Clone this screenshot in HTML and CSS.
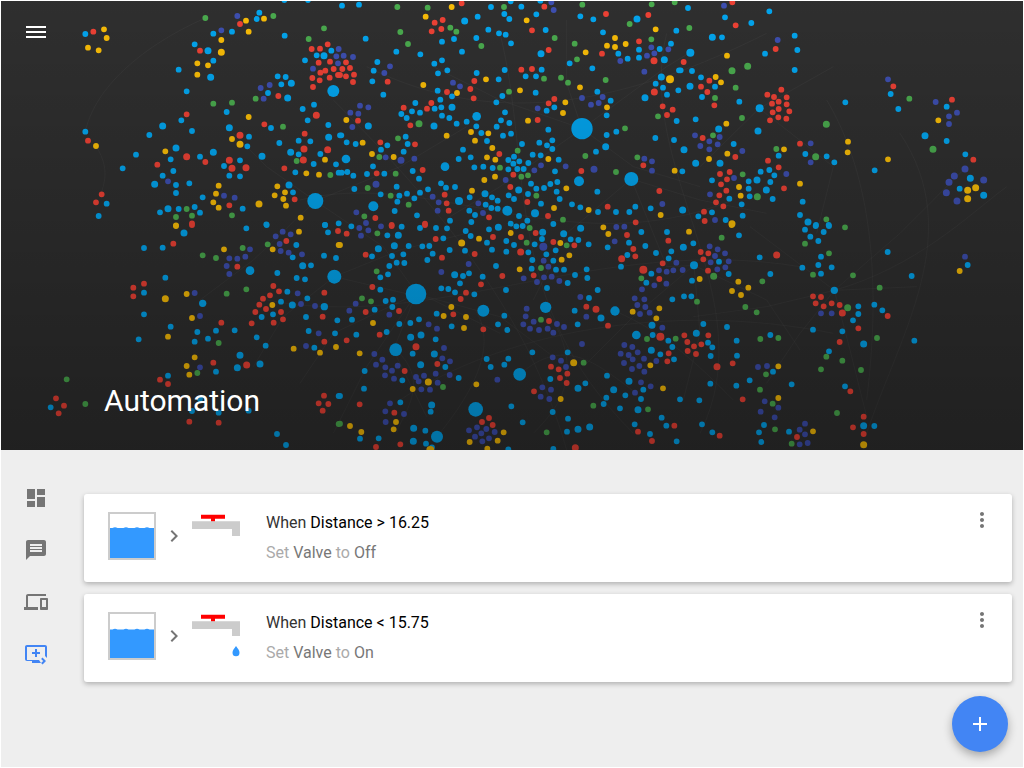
FILE: index.html
```html
<!DOCTYPE html>
<html lang="en">
<head>
<meta charset="utf-8">
<title>Automation</title>
<link rel="stylesheet" href="styles.css">
</head>
<body>
<div class="app">
<header class="hero">
<svg class="graph" viewBox="3 3 3066 1347" aria-hidden="true">
<path class="edges" d="M946 603L1200 500L1400 380M946 603L1150 740L1250 880M946 603L800 500L700 400M946 603L760 780L600 900M1003 830L1300 900L1500 1000M1003 830L850 950L760 1100M1003 830L1200 750L1400 700M1248 882L1000 1000L900 1150M1248 882L1500 950L1700 1100M1248 882L1100 1100L1000 1300M1248 882L1180 1050L1280 1250M1746 386L1500 300L1300 200M1746 386L1900 500L2100 560M1746 386L1700 250L1700 60M1746 386L2000 200L2070 158M1746 386L1500 560L1350 650M1894 537L2100 600L2300 640M1894 537L1700 700L1600 900M1894 537L2000 800L2090 796M2503 871L2300 920L2080 950M2503 871L2700 700L2900 500M2503 871L2400 1000L2300 1150M2503 871L2550 1050L2600 1250M2503 871L2750 860M2503 871L2250 680M2082 796L2300 900L2400 1050M2082 796L1900 950L1750 1100M2082 796L2100 1000L2050 1200M2278 325L2500 500L2450 700M2278 325L2500 200M2278 325L2100 500M616 54C400 150 280 280 256 395M288 438C340 520 300 570 305 583M2503 871C2750 800 2900 650 3020 560M1427 932C1500 1050 1400 1200 1311 1310M1637 922C1750 1100 1700 1200 1600 1300M1845 933C2000 1000 2100 1100 2200 1200M1559 1123C1700 1000 1800 1100 1910 1180M1187 1049C1300 1150 1200 1250 1190 1300M2480 300C2600 500 2650 800 2600 1200M2700 400C2900 700 2700 1000 2600 1300M900 600C1300 500 1700 800 2200 600M800 900C1300 1000 1800 700 2400 800M1000 300C1400 700 1600 1000 1700 1350M1500 100C1600 500 1500 900 1900 1300M2000 100C1900 500 2300 900 2100 1300M1200 1200C1500 1000 2000 900 2500 1000M1100 200C1500 400 1900 300 2300 100"/>
<g class="nodes">
<path class="b s" d="M256 102h0M640 101h0M696 95h0M770 57h0M778 38h0M584 133h0M640 182h0M536 209h0M560 274h0M854 107h0M853 0h0M924 0h0M915 181h0M950 166h0M994 152h0M833 229h0M857 231h0M844 253h0M804 279h0M908 327h0M942 314h0M923 361h0M985 375h0M680 336h0M544 361h0M576 393h0M448 405h0M256 395h0M813 384h0M747 410h0M742 439h0M838 429h0M896 422h0M931 424h0M1020 406h0M408 464h0M512 478h0M600 470h0M720 481h0M672 498h0M896 463h0M961 462h0M941 492h0M1008 493h0M886 517h0M368 505h0M520 513h0M488 527h0M528 555h0M568 550h0M688 527h0M720 529h0M528 579h0M608 592h0M879 577h0M1016 518h0M320 611h0M296 648h0M536 627h0M584 621h0M480 637h0M600 638h0M728 626h0M799 673h0M975 675h0M1016 670h0"/>
<path class="b m" d="M624 152h0M632 232h0M972 167h0M874 250h0M863 294h0M488 378h0M688 383h0M986 412h0M528 444h0M786 469h0M872 457h0M464 553h0M867 555h0M504 626h0M640 457h0"/>
<path class="r s" d="M280 95h0M720 72h0M600 152h0M935 147h0M960 146h0M983 133h0M956 188h0M990 185h0M1001 207h0M976 212h0M961 218h0M1014 225h0M937 234h0M959 241h0M989 233h0M939 261h0M835 288h0M560 343h0M793 373h0M264 422h0M914 401h0M616 486h0M472 494h0M853 505h0M305 583h0M288 607h0M884 598h0M688 616h0M576 670h0"/>
<path class="r m" d="M949 346h0M720 406h0M912 447h0M983 449h0M688 481h0M560 470h0M696 505h0M738 503h0M910 480h0"/>
<path class="y s" d="M312 88h0M320 114h0M264 143h0M296 151h0M738 62h0M792 56h0M746 95h0M664 120h0M592 190h0M624 196h0M592 224h0M746 351h0M696 417h0M288 438h0M496 454h0M975 479h0M919 520h0M957 524h0M656 557h0M832 559h0M855 577h0M648 581h0M824 586h0M850 597h0M640 607h0M656 623h0M858 617h0M902 653h0M528 676h0"/>
<path class="y m" d="M664 157h0M720 433h0M777 612h0"/>
<path class="g s" d="M616 54h0M820 48h0M972 85h0M926 117h0M767 296h0M640 311h0M696 308h0M849 380h0M890 483h0M991 525h0M560 627h0M576 647h0M528 651h0M696 646h0"/>
<path class="i s" d="M712 48h0M664 91h0M1016 147h0M1009 169h0M1014 190h0M939 206h0M809 255h0M782 264h0M791 296h0M504 544h0M672 587h0M704 593h0"/>
<circle class="bf" cx="1000" cy="273" r="18"/><circle class="bf" cx="946" cy="603" r="24"/>
<g transform="translate(1020)">
<path class="b s" d="M6 17h0M57 14h0M453 21h0M512 4h0M601 2h0M493 42h0M544 20h0M413 50h0M508 57h0M589 43h0M721 49h0M760 58h0M445 89h0M477 100h0M497 104h0M617 90h0M789 97h0M1009 92h0M77 116h0M409 114h0M306 125h0M342 117h0M513 130h0M169 155h0M241 163h0M366 155h0M689 190h0M757 205h0M835 161h0M863 176h0M897 149h0M897 173h0M959 147h0M993 131h0M283 191h0M306 181h0M112 186h0M101 212h0M294 220h0M322 211h0M97 244h0M410 219h0M494 210h0M476 238h0M557 229h0M588 229h0M605 209h0M947 251h0M969 263h0M130 284h0M293 272h0M336 289h0M301 299h0M487 288h0M469 307h0M587 278h0M772 275h0M981 284h0M1015 271h0M1017 211h0M226 309h0M184 342h0M216 334h0M240 338h0M200 354h0M284 326h0M304 322h0M306 347h0M328 354h0M495 337h0M643 322h0M620 332h0M812 302h0M800 346h0M350 371h0M380 365h0M483 361h0M508 369h0M470 380h0M409 379h0M1010 363h0M424 399h0M489 407h0M513 401h0M625 389h0M800 405h0M829 395h0M946 414h0M1002 420h0M4 406h0M20 427h0M47 432h0M142 436h0M197 410h0M203 432h0M441 423h0M598 428h0M621 436h0M637 421h0M637 447h0M546 432h0M768 455h0M123 449h0M191 455h0M369 449h0M356 477h0M392 472h0M522 470h0M578 464h0M602 466h0M656 479h0M99 499h0M403 502h0M430 500h0M458 504h0M505 480h0M538 484h0M520 491h0M565 489h0M532 507h0M505 508h0M551 507h0M22 516h0M5 518h0M40 527h0M81 522h0M133 521h0M218 513h0M237 536h0M645 514h0M303 550h0M318 563h0M345 561h0M573 551h0M631 552h0M652 546h0M43 567h0M170 560h0M122 583h0M201 581h0M178 587h0M172 605h0M223 595h0M240 578h0M264 568h0M564 582h0M589 566h0M612 564h0M650 575h0M389 592h0M456 592h0M506 586h0M522 597h0M659 597h0M772 575h0M473 602h0M603 611h0M437 614h0M454 624h0M473 626h0M388 632h0M405 645h0M696 613h0M721 622h0M774 636h0M828 636h0M868 636h0M886 620h0M932 625h0M164 633h0M231 646h0M537 648h0M562 662h0M394 666h0M330 662h0M512 671h0M640 672h0"/>
<path class="b m" d="M374 63h0M891 57h0M603 161h0M973 179h0M964 231h0M915 293h0M336 322h0M282 378h0M85 378h0M797 440h0M435 581h0M536 570h0"/>
<path class="r s" d="M365 10h0M613 20h0M798 42h0M925 45h0M284 68h0M308 60h0M275 94h0M304 87h0M576 91h0M897 124h0M626 150h0M786 161h0M18 187h0M7 207h0M30 204h0M0 225h0M18 229h0M42 224h0M39 246h0M143 245h0M544 209h0M576 207h0M403 243h0M391 267h0M321 276h0M401 295h0M626 310h0M643 297h0M274 309h0M261 326h0M191 323h0M968 319h0M998 329h0M981 345h0M54 362h0M211 376h0M593 360h0M121 427h0M225 433h0M478 462h0M910 496h0M248 510h0M110 520h0M724 513h0M520 524h0M511 561h0M958 573h0M314 584h0M320 610h0M562 606h0M803 620h0M326 632h0M106 654h0M447 652h0M624 648h0M887 667h0M255 671h0M155 675h0"/>
<path class="r m" d="M942 182h0M943 276h0"/>
<path class="y s" d="M335 21h0M257 50h0M560 61h0M947 88h0M825 114h0M801 137h0M825 141h0M857 132h0M737 157h0M438 238h0M250 255h0M540 271h0M351 279h0M720 262h0M676 307h0M801 322h0M669 339h0M19 360h0M564 362h0M393 396h0M445 400h0M405 422h0M320 407h0M68 428h0M457 444h0M96 462h0M161 471h0M441 472h0M466 479h0M625 477h0M1004 512h0M433 540h0M465 530h0M679 565h0M396 572h0M642 624h0M746 630h0M962 645h0"/>
<path class="g s" d="M172 21h0M263 23h0M492 21h0M727 14h0M935 13h0M1004 7h0M869 72h0M331 83h0M349 95h0M181 96h0M204 132h0M424 138h0M644 114h0M704 131h0M934 118h0M711 178h0M612 236h0M663 233h0M684 248h0M797 240h0M507 275h0M954 349h0M174 415h0M855 385h0M118 471h0M533 452h0M736 468h0M892 472h0M480 503h0M828 516h0M167 521h0M544 530h0M564 526h0M83 564h0M152 587h0M589 587h0M206 614h0M73 649h0M669 659h0"/>
<path class="g m" d="M237 371h0"/>
<path class="i s" d="M634 7h0M641 30h0M150 199h0M133 219h0M934 142h0M985 148h0M943 160h0M921 167h0M841 183h0M913 215h0M339 248h0M360 259h0M726 294h0M788 291h0M776 309h0M753 314h0M593 325h0M60 317h0M85 322h0M31 338h0M55 341h0M37 381h0M137 472h0M223 476h0M603 496h0M677 499h0M583 511h0M913 476h0M936 484h0M936 512h0M497 540h0M278 590h0M296 607h0M293 632h0M415 610h0M429 639h0M49 637h0M967 612h0M78 669h0M11 167h0M39 171h0"/>
<path class="i m" d="M183 481h0M762 508h0M108 553h0"/>
<path class="y l" d="M990 238h0"/>
<circle class="bf" cx="410" cy="349" r="13"/><circle class="bf" cx="18" cy="477" r="13"/><circle class="bf" cx="315" cy="500" r="13"/><circle class="bf" cx="717" cy="544" r="15"/><circle class="bf" cx="874" cy="537" r="21"/><circle class="bf" cx="357" cy="603" r="12"/><circle class="bf" cx="100" cy="619" r="15"/><circle class="bf" cx="502" cy="632" r="15"/><circle class="bf" cx="585" cy="640" r="12"/><circle class="bf" cx="726" cy="386" r="32"/>
</g>
<g transform="translate(2040)">
<path class="b s" d="M24 24h0M268 34h0M135 52h0M214 69h0M126 112h0M344 107h0M352 150h0M255 161h0M344 210h0M2 211h0M36 213h0M63 232h0M105 260h0M66 291h0M178 305h0M47 358h0M496 307h0M632 282h0M655 327h0M800 320h0M800 423h0M161 432h0M296 467h0M376 462h0M440 469h0M463 487h0M856 463h0M7 514h0M242 515h0M268 510h0M283 526h0M96 541h0M206 544h0M271 546h0M584 511h0M206 566h0M148 596h0M209 589h0M278 597h0M185 613h0M368 605h0M839 566h0M96 637h0M55 649h0M137 660h0M188 647h0M360 645h0M408 675h0M446 675h0"/>
<path class="b m" d="M97 112h0M30 259h0M116 387h0M234 393h0M735 407h0M12 449h0M47 490h0M120 490h0M231 540h0M871 535h0M259 570h0M911 586h0M8 630h0M384 666h0"/>
<path class="r s" d="M157 7h0M167 76h0M287 147h0M11 186h0M88 242h0M63 260h0M82 276h0M103 316h0M304 269h0M262 284h0M282 291h0M320 292h0M296 305h0M276 311h0M320 313h0M296 327h0M328 334h0M278 337h0M295 352h0M319 356h0M270 361h0M68 414h0M360 431h0M640 259h0M816 299h0M166 471h0M264 482h0M296 502h0M880 479h0M149 516h0M120 522h0M141 538h0M123 553h0M139 572h0M118 586h0M312 565h0M108 607h0M130 619h0M72 635h0M74 663h0"/>
<path class="y s" d="M141 167h0M107 231h0M123 247h0M139 371h0M504 425h0M503 457h0M312 448h0M142 461h0M87 477h0M624 478h0M360 551h0M177 561h0M182 587h0M775 361h0"/>
<path class="y m" d="M863 571h0M887 563h0M863 596h0M156 671h0"/>
<path class="g s" d="M28 84h0M167 263h0M105 294h0M186 354h0M688 296h0M99 406h0M289 447h0M188 523h0M439 658h0"/>
<path class="g m" d="M156 212h0M203 199h0M439 373h0M759 448h0M407 470h0M232 590h0"/>
<path class="i s" d="M132 17h0M293 120h0M624 238h0M767 306h0M831 338h0M807 349h0M807 372h0M45 406h0M119 411h0M88 424h0M113 433h0M61 438h0M88 448h0M187 453h0M392 430h0M392 487h0M319 522h0M162 534h0M90 583h0M105 660h0"/>
<path class="i m" d="M855 507h0M823 528h0M807 547h0M911 540h0M799 578h0M831 603h0"/>
<circle class="bf" cx="31" cy="158" r="12"/><circle class="bf" cx="239" cy="325" r="12"/>
</g>
<g transform="translate(0 675)">
<path class="b s" d="M739 10h0M432 69h0M488 68h0M800 0h0M975 0h0M984 22h0M889 60h0M878 97h0M933 121h0M972 92h0M1008 99h0M832 144h0M496 158h0M890 159h0M915 163h0M862 200h0M432 203h0M922 220h0M843 230h0M819 268h0M785 276h0M918 276h0M432 268h0M1012 286h0M512 305h0M592 321h0M648 317h0M704 316h0M926 318h0M1005 325h0M584 350h0M624 341h0M770 337h0M416 343h0M797 362h0M943 368h0M504 452h0M648 440h0M1016 513h0M600 522h0M576 558h0M656 563h0M746 557h0M152 547h0M831 627h0M858 660h0"/>
<path class="b m" d="M552 24h0M908 122h0M877 240h0M712 428h0M720 391h0M780 417h0"/>
<path class="r s" d="M576 0h0M520 56h0M1014 18h0M859 48h0M712 125h0M820 183h0M837 199h0M810 211h0M973 203h0M789 221h0M778 239h0M798 252h0M766 261h0M843 261h0M849 283h0M821 293h0M755 295h0M968 275h0M664 293h0M400 188h0M432 176h0M400 214h0M973 350h0M640 413h0M480 464h0M504 477h0M168 520h0M192 542h0M176 565h0M972 512h0M956 535h0M985 537h0M968 557h0M568 590h0M656 593h0"/>
<path class="r m" d="M740 420h0"/>
<path class="y s" d="M528 3h0M897 20h0M1016 60h0M672 73h0M818 73h0M817 240h0M560 207h0M576 279h0M504 335h0M881 371h0M960 383h0M1008 366h0M584 397h0M560 423h0M568 449h0"/>
<path class="y m" d="M496 221h0"/>
<path class="g s" d="M608 91h0M648 99h0M728 69h0M803 58h0M680 206h0M739 193h0M656 354h0M592 444h0M200 463h0M256 537h0M1016 597h0"/>
<path class="i s" d="M848 20h0M827 34h0M872 28h0M839 57h0M750 73h0M842 78h0M866 83h0M906 88h0M688 100h0M712 101h0M736 95h0M680 123h0M688 147h0M584 204h0M600 273h0M893 205h0M903 237h0M945 243h0M956 325h0M918 363h0M600 427h0"/>
<circle class="bf" cx="750" cy="137" r="13"/><circle class="bf" cx="973" cy="245" r="11"/><circle class="bf" cx="608" cy="235" r="11"/><circle class="bf" cx="1003" cy="155" r="21"/>
</g>
<g transform="translate(1020 675)">
<path class="b s" d="M34 4h0M185 5h0M240 9h0M288 9h0M321 10h0M377 18h0M447 13h0M529 4h0M548 3h0M904 21h0M981 21h0M392 33h0M142 31h0M310 40h0M441 53h0M499 48h0M606 42h0M692 43h0M715 45h0M522 60h0M584 58h0M746 58h0M916 63h0M206 63h0M247 64h0M268 63h0M329 75h0M375 77h0M456 74h0M499 80h0M647 76h0M565 82h0M619 88h0M948 84h0M994 79h0M96 94h0M156 93h0M190 88h0M278 86h0M803 67h0M862 90h0M986 100h0M262 105h0M170 113h0M193 114h0M577 105h0M640 107h0M148 123h0M468 123h0M575 131h0M648 134h0M672 134h0M740 133h0M867 53h0M843 125h0M144 148h0M121 157h0M369 153h0M387 145h0M428 155h0M705 150h0M742 159h0M934 146h0M919 173h0M360 175h0M683 174h0M304 190h0M325 192h0M498 195h0M621 189h0M121 194h0M345 202h0M403 208h0M773 195h0M747 219h0M137 228h0M159 224h0M157 246h0M104 254h0M997 223h0M290 266h0M493 272h0M704 257h0M36 284h0M178 297h0M211 294h0M237 283h0M474 298h0M502 315h0M713 298h0M335 304h0M49 329h0M140 321h0M287 343h0M938 330h0M985 347h0M997 366h0M577 382h0M683 382h0M961 388h0M1002 403h0M218 386h0M440 402h0M505 401h0M452 426h0M493 419h0M316 426h0M74 438h0M187 466h0M356 459h0M631 462h0M736 475h0M801 452h0M910 494h0M72 491h0M856 511h0M903 522h0M0 513h0M181 532h0M272 560h0M514 544h0M638 561h0M799 518h0M791 537h0M840 550h0M965 578h0M684 581h0M548 592h0M256 617h0M884 598h0M979 602h0M681 620h0M116 640h0M60 641h0M258 656h0M276 667h0M930 627h0M1010 649h0M505 673h0M640 672h0"/>
<path class="b m" d="M475 7h0M608 22h0M671 26h0M722 10h0M175 31h0M115 71h0M163 62h0M344 149h0M783 279h0M936 301h0M212 337h0M243 330h0M934 376h0M283 387h0M242 419h0M714 490h0M867 469h0M821 494h0M275 540h0M894 554h0M221 610h0M714 613h0M749 606h0M220 649h0"/>
<path class="r s" d="M155 3h0M255 0h0M20 26h0M287 42h0M459 36h0M543 36h0M587 24h0M861 30h0M640 51h0M703 61h0M985 47h0M880 72h0M77 89h0M306 98h0M404 87h0M886 94h0M968 115h0M487 153h0M581 151h0M958 162h0M423 178h0M97 186h0M378 203h0M362 222h0M739 245h0M77 261h0M177 258h0M340 268h0M627 288h0M804 302h0M430 313h0M119 329h0M20 346h0M986 385h0M982 409h0M194 438h0M292 417h0M633 425h0M656 433h0M682 446h0M660 459h0M680 474h0M582 499h0M59 538h0M163 563h0M447 579h0M426 591h0M458 600h0M1003 602h0M894 620h0M936 648h0M108 666h0M181 658h0"/>
<path class="r m" d="M542 81h0M845 101h0M768 253h0M228 365h0M706 668h0"/>
<path class="r l" d="M910 134h0M961 335h0"/>
<path class="y s" d="M0 60h0M790 7h0M805 27h0M512 24h0M417 41h0M661 54h0M688 91h0M665 104h0M539 133h0M958 250h0M878 260h0M334 246h0M311 273h0M378 276h0M949 280h0M99 294h0M372 309h0M59 385h0M931 421h0M218 492h0M409 478h0M969 490h0M662 522h0M168 591h0M161 613h0M64 621h0M30 603h0M491 622h0M389 651h0M473 647h0M442 671h0"/>
<path class="y m" d="M365 54h0M701 413h0M265 471h0"/>
<path class="y l" d="M271 675h0"/>
<path class="g s" d="M112 25h0M569 9h0M560 53h0M680 61h0M603 129h0M110 139h0M904 160h0M66 220h0M93 229h0M603 284h0M921 342h0M1007 341h0M731 413h0M309 486h0M760 542h0M924 553h0M620 622h0M0 596h0"/>
<path class="i s" d="M58 9h0M85 16h0M123 4h0M63 32h0M829 6h0M853 5h0M824 49h0M611 107h0M625 125h0M957 136h0M980 140h0M1000 136h0M386 117h0M1009 113h0M304 141h0M551 160h0M612 157h0M635 155h0M658 168h0M591 171h0M979 176h0M943 181h0M906 193h0M721 216h0M884 220h0M913 223h0M47 236h0M892 240h0M916 246h0M28 257h0M560 251h0M148 269h0M739 275h0M900 267h0M929 263h0M557 274h0M266 298h0M291 311h0M550 298h0M581 290h0M651 297h0M570 311h0M597 315h0M623 311h0M672 306h0M640 323h0M967 308h0M726 357h0M853 360h0M877 366h0M312 369h0M103 387h0M127 404h0M108 419h0M136 427h0M173 422h0M156 437h0M135 451h0M162 461h0M842 386h0M866 390h0M893 382h0M878 403h0M912 401h0M949 408h0M852 414h0M898 423h0M876 432h0M913 440h0M307 400h0M330 409h0M287 446h0M329 450h0M638 397h0M663 407h0M678 426h0M228 456h0M252 452h0M236 469h0M293 473h0M244 493h0M270 494h0M472 464h0M607 487h0M633 494h0M602 515h0M628 522h0M903 472h0M932 484h0M885 503h0M150 535h0M136 559h0M192 567h0M137 591h0M411 607h0M387 616h0M439 612h0M424 625h0M464 621h0M405 635h0M447 640h0M427 649h0"/>
<path class="i l" d="M610 65h0"/>
<circle class="bf" cx="228" cy="207" r="31"/><circle class="bf" cx="430" cy="257" r="18"/><circle class="bf" cx="617" cy="247" r="17"/><circle class="bf" cx="825" cy="258" r="14"/><circle class="bf" cx="167" cy="374" r="19"/><circle class="bf" cx="889" cy="330" r="13"/><circle class="bf" cx="539" cy="448" r="19"/><circle class="bf" cx="407" cy="553" r="22"/><circle class="bf" cx="291" cy="635" r="18"/>
</g>
<g transform="translate(2040 675)">
<path class="b s" d="M375 14h0M407 3h0M431 21h0M447 3h0M391 35h0M415 48h0M177 31h0M40 55h0M623 81h0M423 95h0M239 97h0M415 120h0M367 128h0M455 127h0M117 110h0M695 153h0M146 147h0M271 147h0M423 146h0M36 167h0M12 214h0M34 214h0M535 244h0M583 239h0M607 256h0M535 267h0M863 120h0M70 297h0M141 306h0M519 286h0M399 314h0M487 319h0M84 353h0M97 367h0M170 347h0M271 330h0M703 347h0M92 393h0M171 392h0M447 379h0M279 440h0M91 476h0M169 482h0M209 466h0M335 478h0M495 484h0M0 523h0M58 526h0M66 598h0M252 600h0M583 603h0M97 622h0M237 622h0M327 620h0M244 651h0"/>
<path class="b m" d="M10 67h0M49 325h0M551 357h0M551 602h0"/>
<path class="r s" d="M62 81h0M85 85h0M70 103h0M84 137h0M399 214h0M423 216h0M407 235h0M431 244h0M455 235h0M479 240h0M623 273h0M535 310h0M479 351h0M85 331h0M13 331h0M22 351h0M64 358h0M42 364h0M23 378h0M48 387h0M158 415h0M188 523h0M511 499h0M551 575h0M519 607h0M551 627h0M119 632h0M351 636h0"/>
<path class="r m" d="M290 90h0M487 264h0M111 425h0"/>
<path class="y s" d="M27 20h0M155 0h0M59 162h0M175 170h0M205 188h0M156 198h0M183 210h0M839 138h0M295 424h0M295 519h0M399 619h0"/>
<path class="y m" d="M551 659h0"/>
<path class="g s" d="M495 7h0M125 38h0M375 56h0M447 85h0M247 169h0M399 149h0M519 151h0M599 188h0M51 230h0M196 246h0M230 262h0M241 342h0M295 339h0M591 339h0M439 395h0M487 407h0M423 433h0M543 435h0M258 448h0M240 494h0M278 536h0M471 564h0M285 613h0M335 656h0"/>
<path class="g m" d="M101 154h0M503 248h0"/>
<path class="i s" d="M89 64h0M113 73h0M135 85h0M105 93h0M92 112h0M146 109h0M112 133h0M136 127h0M8 135h0M855 95h0M423 265h0M455 265h0M234 426h0M261 423h0M254 529h0M295 548h0M242 560h0M284 577h0M375 596h0M359 614h0M375 628h0M359 658h0M383 654h0"/>
<circle class="bf" cx="42" cy="121" r="12"/><circle class="bf" cx="463" cy="196" r="11"/>
</g>
</g>
</svg>
<div class="shade"></div>
<button class="menu" aria-label="Menu"><span class="menu-bar"></span><span class="menu-bar"></span><span class="menu-bar"></span></button>
<h1 class="title">Automation</h1>
</header>
<div class="body">
<nav class="rail">
<svg class="icon" viewBox="0 0 24 24"><path d="M3 13h8V3H3v10zm0 8h8v-6H3v6zm10 0h8V11h-8v10zm0-18v6h8V3h-8z"/></svg>
<svg class="icon" viewBox="0 0 24 24"><path d="M20 2H4c-1.1 0-1.99.9-1.99 2L2 22l4-4h14c1.1 0 2-.9 2-2V4c0-1.1-.9-2-2-2zm-2 12H6v-2h12v2zm0-3H6V9h12v2zm0-3H6V6h12v2z"/></svg>
<svg class="icon" viewBox="0 0 24 24"><path d="M4 6h18V4H4c-1.1 0-2 .9-2 2v11H0v3h14v-3H4V6zm19 2h-6c-.55 0-1 .45-1 1v10c0 .55.45 1 1 1h6c.55 0 1-.45 1-1V9c0-.55-.45-1-1-1zm-1 9h-4v-7h4v7z"/></svg>
<svg class="icon icon-active" viewBox="0 0 24 24"><path d="M21 3H3c-1.11 0-2 .89-2 2v12c0 1.1.89 2 2 2h5v2h9l-2-3H3V5h18v9l2 2V5c0-1.11-.9-2-2-2zm-5 7v2h-3v3h-2v-3H8v-2h3V7h2v3h3z"/><path d="M18.5 15.5l3.5 3.5-3.5 3.5-1.4-1.4 2.1-2.1-2.1-2.1z"/></svg>
</nav>
<main class="list">
<article class="card">
<div class="scene">
<svg class="tank" viewBox="0 0 48 48"><rect class="tank-wall" width="48" height="48"/><rect class="tank-air" x="2" y="2" width="44" height="44"/><path class="water" d="M2 16H4.500q2.500-1.500 5 0H15.500q2.500-1.500 5 0H26.500q2.500-1.500 5 0H36.500q2.500-1.500 5 0H46V46H2z"/></svg>
<svg class="chev" viewBox="0 0 24 24"><path d="M10 6L8.590 7.410 13.170 12l-4.580 4.590L10 18l6-6z"/></svg>
<svg class="tap" viewBox="0 0 48 48"><path class="valve" d="M9 2.700h24v4H23v3h-4v-3H9z"/><path class="pipe" d="M0 9.300h48V24h-8v-7H0z"/></svg>
</div>
<div class="rule"><p class="when">When <b>Distance &gt; 16.25</b></p><p class="then">Set <b>Valve</b> to <b>Off</b></p></div>
<svg class="more" viewBox="0 0 24 24"><path d="M12 8c1.100 0 2-.9 2-2s-.9-2-2-2-2 .9-2 2 .9 2 2 2zm0 2c-1.100 0-2 .9-2 2s.9 2 2 2 2-.9 2-2-.9-2-2-2zm0 6c-1.100 0-2 .9-2 2s.9 2 2 2 2-.9 2-2-.9-2-2-2z"/></svg>
</article>
<article class="card">
<div class="scene">
<svg class="tank" viewBox="0 0 48 48"><rect class="tank-wall" width="48" height="48"/><rect class="tank-air" x="2" y="2" width="44" height="44"/><path class="water" d="M2 17.500H4.500q2.500-1.500 5 0H15.500q2.500-1.500 5 0H26.500q2.500-1.500 5 0H36.500q2.500-1.500 5 0H46V46H2z"/></svg>
<svg class="chev" viewBox="0 0 24 24"><path d="M10 6L8.590 7.410 13.170 12l-4.580 4.590L10 18l6-6z"/></svg>
<svg class="tap" viewBox="0 0 48 48"><path class="valve" d="M9 2.700h24v4H23v3h-4v-3H9z"/><path class="pipe" d="M0 9.300h48V24h-8v-7H0z"/><path class="drop" d="M44 34c2 2.800 3.500 4.500 3.500 6.700a3.500 3.500 0 0 1-7 0c0-2.200 1.500-3.900 3.500-6.700z"/></svg>
</div>
<div class="rule"><p class="when">When <b>Distance &lt; 15.75</b></p><p class="then">Set <b>Valve</b> to <b>On</b></p></div>
<svg class="more" viewBox="0 0 24 24"><path d="M12 8c1.100 0 2-.9 2-2s-.9-2-2-2-2 .9-2 2 .9 2 2 2zm0 2c-1.100 0-2 .9-2 2s.9 2 2 2 2-.9 2-2-.9-2-2-2zm0 6c-1.100 0-2 .9-2 2s.9 2 2 2 2-.9 2-2-.9-2-2-2z"/></svg>
</article>
</main>
<button class="fab" aria-label="Add"><svg class="fab-icon" viewBox="0 0 24 24"><path d="M19 13h-6v6h-2v-6H5v-2h6V5h2v6h6v2z"/></svg></button>
</div>
</div>
</body>
</html>
```
FILE: styles.css
```css
* { box-sizing: border-box; }
html, body { margin: 0; height: 100%; overflow: hidden; }
body { padding: 1px; background: #fff; font-family: Roboto, "Liberation Sans", sans-serif; }
.app { height: 766px; display: flex; flex-direction: column; background: #eee; }

.hero { position: relative; flex: 0 0 449px; background: #303030; overflow: hidden; }
.graph { position: absolute; inset: 0; width: 1022px; height: 449px; display: block; }
.edges { fill: none; stroke: rgba(255,255,255,.035); stroke-width: 3; }
.nodes path { fill: none; stroke-linecap: round; }
.s { stroke-width: 17.5; }
.m { stroke-width: 21; }
.l { stroke-width: 24; }
.b { stroke: #03a9f4; }
.r { stroke: #f44336; }
.y { stroke: #ffc107; }
.g { stroke: #4caf50; }
.i { stroke: #3f51b5; }
.bf { fill: #03a9f4; }
.shade { position: absolute; inset: 0; background: linear-gradient(rgba(0,0,0,.03), rgba(0,0,0,.33)); }
.menu { position: absolute; left: 25px; top: 25px; width: 20px; height: 12px; padding: 0; border: 0; background: none; display: flex; flex-direction: column; justify-content: space-between; }
.menu-bar { display: block; height: 2px; background: #fff; }
.title { position: absolute; left: 103px; top: 382px; margin: 0; font-size: 30px; line-height: 36px; font-weight: 400; color: #fff; }

.body { position: relative; flex: 1; display: flex; }
.rail { flex: 0 0 83px; padding: 36px 0 0 23px; display: flex; flex-direction: column; gap: 28px; }
.icon { width: 24px; height: 24px; fill: #757575; display: block; }
.icon-active { fill: #4285f4; }
.list { flex: 0 0 928px; padding-top: 44px; display: flex; flex-direction: column; gap: 12px; }
.card { height: 88px; background: #fff; border-radius: 3px; box-shadow: 0 2px 5px rgba(0,0,0,.26); padding: 18px 18px 0 24px; display: flex; align-items: flex-start; }
.scene { display: flex; align-items: flex-start; }
.tank { width: 48px; height: 48px; display: block; }
.tank-wall { fill: #ccc; }
.tank-air { fill: #fff; }
.water { fill: #3399ff; }
.chev { width: 24px; height: 24px; margin: 12px 0 0 6px; fill: #757575; display: block; }
.tap { width: 48px; height: 48px; margin-left: 6px; display: block; }
.valve { fill: #f00; }
.pipe { fill: #ccc; }
.drop { fill: #3399ff; }
.rule { margin-left: 26px; padding-top: 1px; }
.when, .then { margin: 0; font-size: 16px; line-height: 20px; }
.when { color: #333; }
.when b { font-weight: 400; color: #000; }
.then { margin-top: 10px; color: #aaa; }
.then b { font-weight: 400; color: #777; }
.more { width: 24px; height: 24px; margin: -4px 0 0 auto; fill: #757575; display: block; }
.fab { position: absolute; right: 15px; top: 246px; width: 56px; height: 56px; padding: 16px; border: 0; border-radius: 50%; background: #4285f4; box-shadow: 0 4px 10px rgba(0,0,0,.3); }
.fab-icon { width: 24px; height: 24px; display: block; fill: #fff; margin: 0; }
```
